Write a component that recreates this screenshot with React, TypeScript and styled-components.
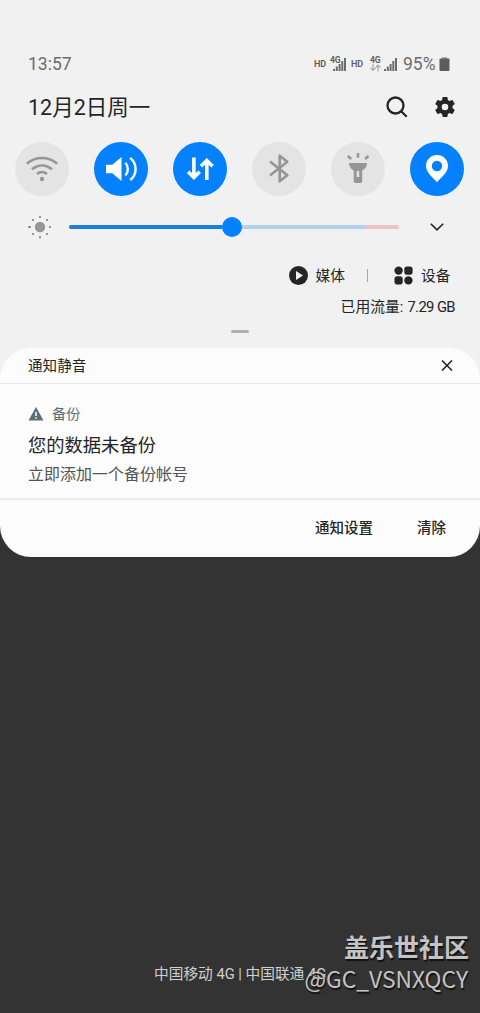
import React from 'react';
import styled, { createGlobalStyle } from 'styled-components';

const GlobalStyle = createGlobalStyle`
  * { box-sizing: border-box; }
  body {
    margin: 0;
    background: #333333;
    color: #252525;
    font-family: Roboto, "Noto Sans CJK SC", sans-serif;
  }
  svg { display: block; flex: none; }
`;

const Screen = styled.main`
  width: 480px;
  height: 1013px;
  display: flex;
  flex-direction: column;
  overflow: hidden;
  background: #333333;
`;

const QuickPanel = styled.section`
  height: 348px;
  flex: none;
  padding-top: 52px;
  background: #f1f1f1;
`;

const Label = styled.span<{ $size: number; $width?: number; $color?: string; $weight?: number; $spacing?: number }>`
  flex: none;
  font-size: ${p => p.$size}px;
  width: ${p => (p.$width ? `${p.$width}px` : 'auto')};
  color: ${p => p.$color ?? '#252525'};
  font-weight: ${p => p.$weight ?? 400};
  letter-spacing: ${p => p.$spacing ?? 0}px;
  line-height: 24px;
  white-space: nowrap;
`;

const StatusBar = styled.header`
  height: 24px;
  padding: 0 30px 0 28px;
  display: flex;
  align-items: center;
  justify-content: space-between;
`;

const StatusIcons = styled.div`
  display: flex;
  align-items: center;
  height: 24px;
`;

const Hd = styled.span<{ $gap: number }>`
  width: 13px;
  margin-right: ${p => p.$gap}px;
  font-size: 9px;
  font-weight: 600;
  line-height: 22px;
  color: #5c5c5c;
`;

const Signal = styled.div<{ $width: number; $gap: number }>`
  position: relative;
  width: ${p => p.$width}px;
  height: 24px;
  margin-right: ${p => p.$gap}px;
  display: flex;
  justify-content: flex-end;
  align-items: center;
`;

const Network = styled.span`
  position: absolute;
  left: 0;
  top: 3px;
  font-size: 8.5px;
  font-weight: 700;
  line-height: 10px;
  letter-spacing: -0.2px;
  color: #5c5c5c;
`;

const TransferArrows = styled.svg`
  position: absolute;
  left: 0;
  top: 12px;
`;

const DateRow = styled.div`
  height: 62px;
  padding: 0 25px 0 28px;
  display: flex;
  align-items: center;
  justify-content: space-between;

  ${Label} { padding-top: 1px; }
`;

const Actions = styled.div`
  display: flex;
  align-items: center;
  gap: 27px;
`;

const Toggles = styled.div`
  margin-top: 4px;
  padding: 0 16px 0 15px;
  display: flex;
  justify-content: space-between;
`;

const Toggle = styled.div<{ $on?: boolean }>`
  width: 54px;
  height: 54px;
  border-radius: 50%;
  display: grid;
  place-items: center;
  background: ${p => (p.$on ? '#0381fe' : '#e4e4e4')};
  color: ${p => (p.$on ? '#ffffff' : '#969696')};
`;

const BrightnessRow = styled.div`
  height: 62px;
  padding: 0 35px 0 27px;
  display: flex;
  align-items: center;
`;

const Track = styled.div`
  width: 330px;
  height: 4px;
  margin: 0 31px 0 16px;
  display: flex;
  align-items: center;
  border-radius: 2px;
  background: linear-gradient(to right, #b1d1ee 296px, #efc4c0 296px);
`;

const Filled = styled.div`
  width: 153px;
  height: 4px;
  border-radius: 2px 0 0 2px;
  background: #1b7fdb;
`;

const Thumb = styled.div`
  width: 20px;
  height: 20px;
  border-radius: 50%;
  background: #0381fe;
`;

const Shortcuts = styled.div`
  height: 35px;
  padding-right: 29px;
  display: flex;
  align-items: center;
  justify-content: flex-end;
`;

const Shortcut = styled.div`
  display: flex;
  align-items: center;
  gap: 8px;
`;

const Divider = styled.div`
  width: 1px;
  height: 13px;
  margin: 0 26px 0 22px;
  background: #a8a8a8;
`;

const Usage = styled.div`
  height: 27px;
  padding-right: 25px;
  display: flex;
  align-items: center;
  justify-content: flex-end;
  gap: 4px;
`;

const Handle = styled.div`
  width: 18px;
  height: 3px;
  margin: 10px auto 0;
  border-radius: 2px;
  background: #b0b0b0;
`;

const CardBackdrop = styled.section`
  flex: none;
  background: linear-gradient(#f1f1f1 50%, #333333 50%);
`;

const Card = styled.article`
  height: 209px;
  border-radius: 31px;
  overflow: hidden;
  background: #fcfcfc;
`;

const CardHeader = styled.div`
  height: 36px;
  padding: 0 27px 0 28px;
  display: flex;
  align-items: center;
  justify-content: space-between;
  border-bottom: 1px solid #ebebeb;
`;

const Notice = styled.div`
  height: 116px;
  padding: 18px 28px 0;
  display: flex;
  flex-direction: column;
  border-bottom: 2px solid #ebebeb;
`;

const NoticeApp = styled.div`
  height: 24px;
  display: flex;
  align-items: center;
  gap: 8px;
`;

const NoticeTitle = styled.div`
  height: 37px;
  padding-top: 8px;
`;

const CardActions = styled.div`
  height: 57px;
  padding: 1px 34px 0 0;
  display: flex;
  align-items: center;
  justify-content: flex-end;
  gap: 44px;
`;

const Footer = styled.footer`
  position: relative;
  margin-top: auto;
  height: 51px;
  padding-left: 154px;
`;

const Watermark = styled.div`
  position: absolute;
  right: 11px;
  bottom: 18px;
  display: flex;
  flex-direction: column;
  align-items: flex-end;
  font-family: "Noto Sans CJK SC", sans-serif;
  color: #c4c4c4;
  text-shadow: 1px 2px 1px #111111;
  white-space: nowrap;
`;

const Community = styled.strong`
  font-size: 25px;
  line-height: 33px;
  font-weight: 700;
`;

const Account = styled.span`
  margin-right: 1px;
  font-size: 22.8px;
  line-height: 32px;
`;

const SignalBars = () => (
  <svg width="13" height="14" viewBox="0 0 13 14" fill="#6c6c6c">
    <path d="M0 12h2v2H0zM2.8 9.5h2V14h-2zM5.6 7h2v7h-2zM8.3 4h2v10h-2zM11 1h2v13h-2z" />
  </svg>
);

const Battery = () => (
  <svg width="11" height="15" viewBox="0 0 11 15">
    <path d="M3 0h5v2H3z" fill="#aaaaaa" />
    <rect x=".5" y="1.6" width="10" height="12.4" rx="1" fill="#5c5c5c" />
  </svg>
);

const SearchIcon = () => (
  <svg width="22" height="22" viewBox="0 0 22 22" fill="none" stroke="#252525" strokeWidth="2.3">
    <circle cx="9.5" cy="9.5" r="8" />
    <path d="m15.2 15.2 5.5 5.5" />
  </svg>
);

const GearIcon = () => (
  <svg width="20" height="20" viewBox="2 2 20 20" fill="#252525">
    <path d="M19.43 12.98c.04-.32.07-.64.07-.98s-.03-.66-.07-.98l2.11-1.65a.5.5 0 0 0 .12-.64l-2-3.46a.5.5 0 0 0-.61-.22l-2.49 1a7.3 7.3 0 0 0-1.69-.98l-.38-2.65A.49.49 0 0 0 14 2h-4a.49.49 0 0 0-.49.42l-.38 2.65c-.61.25-1.17.59-1.69.98l-2.49-1a.5.5 0 0 0-.61.22l-2 3.46a.5.5 0 0 0 .12.64l2.11 1.65c-.04.32-.07.65-.07.98s.03.66.07.98l-2.11 1.65a.5.5 0 0 0-.12.64l2 3.46c.12.22.39.3.61.22l2.49-1c.52.4 1.08.73 1.69.98l.38 2.65c.03.24.24.42.49.42h4c.25 0 .46-.18.49-.42l.38-2.65c.61-.25 1.17-.59 1.69-.98l2.49 1c.23.09.49 0 .61-.22l2-3.46a.5.5 0 0 0-.12-.64zM12 15.3a3.3 3.3 0 1 1 0-6.6 3.3 3.3 0 0 1 0 6.6z" />
  </svg>
);

const WifiIcon = () => (
  <svg width="54" height="54" viewBox="0 0 54 54" fill="none" stroke="currentColor" strokeWidth="2.5">
    <path d="M11.8 21.8c9.3-7.6 21.1-7.6 30.4 0M17 27.3c6.2-5 13.8-5 20 0M22 32c3.2-2.5 6.8-2.5 10 0" />
    <circle cx="27" cy="37" r="2.2" fill="currentColor" stroke="none" />
  </svg>
);

const SoundIcon = () => (
  <svg width="54" height="54" viewBox="0 0 54 54" fill="none" stroke="currentColor" strokeWidth="2.4">
    <path d="M12 22.7h6.3L27.5 15v24l-9.2-7.7H12z" fill="currentColor" stroke="none" />
    <path d="M31.3 20.8c3.4 3.7 3.4 9 0 12.6M36.2 16c7.2 5.4 7.2 16.5 0 22" />
  </svg>
);

const DataIcon = () => (
  <svg width="54" height="54" viewBox="0 0 54 54" fill="none" stroke="currentColor" strokeWidth="3.6">
    <path d="M20.9 15.5v20M15.1 29.7l5.8 5.8 5.8-5.8M33.8 38V18M28 24.3l5.8-5.8 5.8 5.8" />
  </svg>
);

const BluetoothIcon = () => (
  <svg width="54" height="54" viewBox="0 0 54 54" fill="none" stroke="currentColor" strokeWidth="2.7" strokeLinejoin="round">
    <path d="m18 19.5 17.3 13.8-7.6 6V13.7l7.6 6L18 33.5" />
  </svg>
);

const TorchIcon = () => (
  <svg width="54" height="54" viewBox="0 0 54 54">
    <path fill="currentColor" fillRule="evenodd" d="M18 21h18c0 3.8-2.2 6-4.8 7.7V39q0 2-2 2h-4.5q-2 0-2-2V28.7C20.1 27 18 24.8 18 21zm7.7 8v6h2.5v-6z" />
    <path d="M27 11v4.7M16.8 14l3.5 3M37.5 14l-3.4 3" fill="none" stroke="currentColor" strokeWidth="2.6" />
  </svg>
);

const LocationIcon = () => (
  <svg width="54" height="54" viewBox="0 0 54 54">
    <path fill="currentColor" fillRule="evenodd" d="M27 13c-6.1 0-11 4.8-11 10.8C16 31.7 24 36 27 40.3c3-4.3 11-8.6 11-16.5C38 17.8 33.1 13 27 13zm0 5.8a5.2 5.2 0 1 1 0 10.4 5.2 5.2 0 0 1 0-10.4z" />
  </svg>
);

const SunIcon = () => (
  <svg width="26" height="26" viewBox="0 0 26 26" fill="#969696">
    <circle cx="13" cy="13" r="5.2" />
    <path d="M12 2h2v2h-2zM12 22h2v2.5h-2zM1 12h3v2H1zM22 12h2v2h-2zM5 5h2v2H5zM19 5h2v2h-2zM5 19h2v2H5zM19 19h2v2h-2z" />
  </svg>
);

const PlayIcon = () => (
  <svg width="19" height="19" viewBox="0 0 19 19">
    <circle cx="9.5" cy="9.5" r="9.5" fill="#252525" />
    <path d="M7 5v9l7-4.5z" fill="#f1f1f1" />
  </svg>
);

const DevicesIcon = () => (
  <svg width="19" height="19" viewBox="0 0 19 19" fill="#252525">
    <circle cx="4.6" cy="4.6" r="4.2" />
    <rect x="10.3" y=".5" width="8.3" height="8.2" rx="2.8" />
    <rect x=".5" y="10.3" width="8.2" height="8.2" rx="2.8" />
    <circle cx="14.4" cy="14.4" r="4.2" />
  </svg>
);

export default function App() {
  return (
    <>
      <GlobalStyle />
      <Screen>
        <QuickPanel>
          <StatusBar>
            <Label $size={17.5} $color="#6c6c6c">13:57</Label>
            <StatusIcons>
              <Hd $gap={3}>HD</Hd>
              <Signal $width={16} $gap={5}><Network>4G</Network><SignalBars /></Signal>
              <Hd $gap={6}>HD</Hd>
              <Signal $width={27} $gap={6}>
                <Network>4G</Network>
                <TransferArrows width="11" height="8" viewBox="0 0 11 8" fill="none" stroke="#aaaaaa" strokeWidth="1.2">
                  <path d="M3 0v6M.6 4 3 6.5 5.4 4M8 7.5V1.2M5.6 3.5 8 1l2.4 2.5" />
                </TransferArrows>
                <SignalBars />
              </Signal>
              <Label $size={17.5} $width={36} $color="#6c6c6c">95%</Label>
              <Battery />
            </StatusIcons>
          </StatusBar>
          <DateRow>
            <Label $size={21.5}>12月2日周一</Label>
            <Actions><SearchIcon /><GearIcon /></Actions>
          </DateRow>
          <Toggles>
            <Toggle><WifiIcon /></Toggle>
            <Toggle $on><SoundIcon /></Toggle>
            <Toggle $on><DataIcon /></Toggle>
            <Toggle><BluetoothIcon /></Toggle>
            <Toggle><TorchIcon /></Toggle>
            <Toggle $on><LocationIcon /></Toggle>
          </Toggles>
          <BrightnessRow>
            <SunIcon />
            <Track><Filled /><Thumb /></Track>
            <svg width="14" height="8" viewBox="0 0 14 8" fill="none" stroke="#252525" strokeWidth="1.6"><path d="m.8.8 6.2 6 6.2-6" /></svg>
          </BrightnessRow>
          <Shortcuts>
            <Shortcut><PlayIcon /><Label $size={14.7}>媒体</Label></Shortcut>
            <Divider />
            <Shortcut><DevicesIcon /><Label $size={14.7} $width={30}>设备</Label></Shortcut>
          </Shortcuts>
          <Usage>
            <Label $size={14.8}>已用流量:</Label>
            <Label $size={14.8} $spacing={-0.6}>7.29 GB</Label>
          </Usage>
          <Handle />
        </QuickPanel>
        <CardBackdrop>
          <Card>
            <CardHeader>
              <Label $size={14.6}>通知静音</Label>
              <svg width="12" height="12" viewBox="0 0 12 12" fill="none" stroke="#252525" strokeWidth="1.6"><path d="m1 .5 10 10M11 .5l-10 10" /></svg>
            </CardHeader>
            <Notice>
              <NoticeApp>
                <svg width="16" height="14" viewBox="0 0 16 14">
                  <path d="M8 0 15.5 13.5H.5z" fill="#5a6f78" />
                  <path d="M7.2 5h1.6v4H7.2zM7.2 10.2h1.6v1.6H7.2z" fill="#fcfcfc" />
                </svg>
                <Label $size={14.2} $color="#5a6f78">备份</Label>
              </NoticeApp>
              <NoticeTitle><Label $size={18.3}>您的数据未备份</Label></NoticeTitle>
              <Label $size={16} $color="#555555">立即添加一个备份帐号</Label>
            </Notice>
            <CardActions>
              <Label $size={14.5} $weight={500}>通知设置</Label>
              <Label $size={14.5} $weight={500}>清除</Label>
            </CardActions>
          </Card>
        </CardBackdrop>
        <Footer>
          <Label $size={14.7} $color="#d0d0d0">中国移动 4G | 中国联通 4G</Label>
          <Watermark><Community>盖乐世社区</Community><Account>@GC_VSNXQCY</Account></Watermark>
        </Footer>
      </Screen>
    </>
  );
}
